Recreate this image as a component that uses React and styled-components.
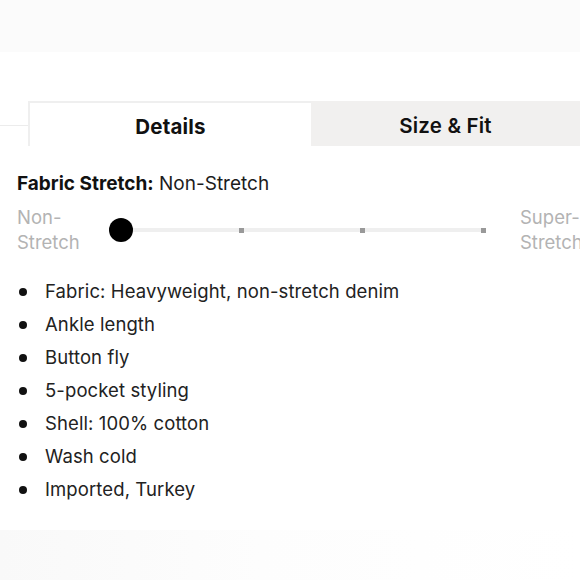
import React from "react";
import styled, { createGlobalStyle } from "styled-components";

const features = [
  "Fabric: Heavyweight, non-stretch denim",
  "Ankle length",
  "Button fly",
  "5-pocket styling",
  "Shell: 100% cotton",
  "Wash cold",
  "Imported, Turkey",
];

export default function App() {
  return (
    <>
      <Global />
      <Page>
        <TopBand />
        <TabRow>
          <LeftRule />
          <Tab active>Details</Tab>
          <Tab>Size &amp; Fit</Tab>
        </TabRow>
        <Content>
          <Heading>
            <b>Fabric Stretch:</b> Non-Stretch
          </Heading>
          <SliderRow>
            <ScaleLabel>
              Non-
              <br />
              Stretch
            </ScaleLabel>
            <Track>
              <Knob />
              <Tick style={{ left: "33.3%" }} />
              <Tick style={{ left: "66.6%" }} />
              <Tick style={{ left: "100%" }} />
            </Track>
            <ScaleLabel right>
              Super-
              <br />
              Stretch
            </ScaleLabel>
          </SliderRow>
          <List>
            {features.map((f) => (
              <Item key={f}>
                <Dot />
                {f}
              </Item>
            ))}
          </List>
        </Content>
        <BottomBand />
      </Page>
    </>
  );
}

const Global = createGlobalStyle`
  html, body {
    margin: 0;
    padding: 0;
    background: #ffffff;
  }
  body {
    font-family: Inter, "Liberation Sans", sans-serif;
    color: #1c1c1c;
  }
`;

const Page = styled.div`
  width: 580px;
  height: 580px;
  overflow: hidden;
  display: flex;
  flex-direction: column;
`;

const TopBand = styled.div`
  height: 52px;
  background: #fbfbfb;
  flex-shrink: 0;
`;

const TabRow = styled.div`
  display: flex;
  height: 45px;
  margin-top: 49px;
  flex-shrink: 0;
`;

const LeftRule = styled.div`
  width: 28px;
  height: 1px;
  margin-top: 24px;
  background: #ececec;
`;

const Tab = styled.div`
  display: flex;
  align-items: center;
  justify-content: center;
  padding-top: 4px;
  font-size: 20.5px;
  letter-spacing: 0.2px;
  font-weight: ${(p) => (p.active ? 700 : 600)};
  color: #111;
  box-sizing: border-box;
  ${(p) =>
    p.active
      ? `
    width: 283px;
    background: #ffffff;
    border-top: 2px solid #efefef;
    border-left: 2px solid #efefef;
  `
      : `
    flex: 1;
    background: #f1f0ef;
  `}
`;

const Content = styled.div`
  padding: 0 0 0 17px;
  flex: 1;
`;

const Heading = styled.div`
  font-size: 19px;
  line-height: 24px;
  margin-top: 26px;
  color: #1c1c1c;
  b {
    font-weight: 700;
    color: #111;
  }
`;

const SliderRow = styled.div`
  display: flex;
  align-items: center;
  margin-top: 9px;
`;

const ScaleLabel = styled.div`
  font-size: 18.5px;
  line-height: 25px;
  color: #b3b3b3;
  width: ${(p) => (p.right ? "80px" : "104px")};
  margin-left: ${(p) => (p.right ? "36px" : "0")};
  flex-shrink: 0;
  white-space: nowrap;
`;

const Track = styled.div`
  position: relative;
  height: 4px;
  background: #efefef;
  width: 363px;
  flex-shrink: 0;
`;

const Knob = styled.div`
  position: absolute;
  left: -12px;
  top: -10px;
  width: 24px;
  height: 24px;
  border-radius: 50%;
  background: #000;
`;

const Tick = styled.div`
  position: absolute;
  top: 0;
  width: 5px;
  height: 5px;
  margin-left: -3px;
  background: #999;
`;

const List = styled.ul`
  margin: 20px 0 0 0;
  padding: 0;
  list-style: none;
  font-size: 18.5px;
  letter-spacing: 0.1px;
  line-height: 33px;
  color: #222;
`;

const Item = styled.li`
  display: flex;
  align-items: center;
`;

const Dot = styled.span`
  width: 8px;
  height: 8px;
  border-radius: 50%;
  background: #111;
  margin-left: 2px;
  margin-right: 18px;
  flex-shrink: 0;
`;

const BottomBand = styled.div`
  height: 50px;
  background: linear-gradient(90deg, #f9f9f9, #fdfdfd 45%, #ffffff);
  flex-shrink: 0;
`;
